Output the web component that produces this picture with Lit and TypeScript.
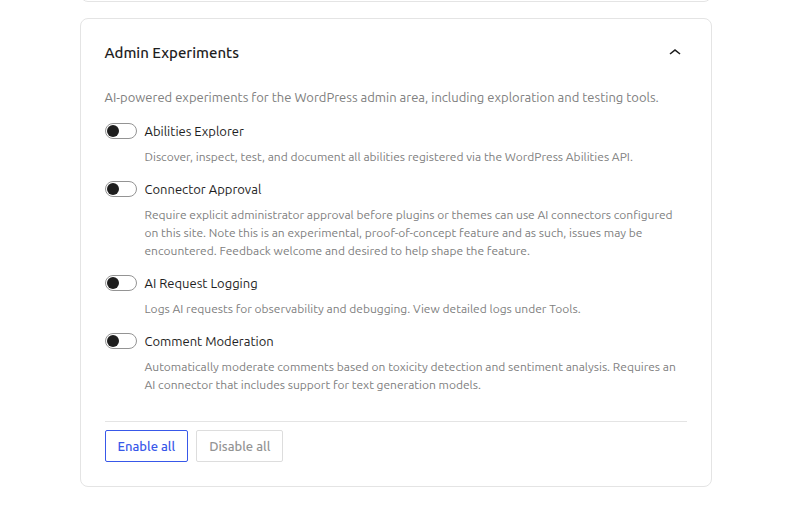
import { LitElement, html, css } from 'lit';
import { customElement, property, state } from 'lit/decorators.js';

interface Experiment { id: string; label: string; help: string; enabled: boolean; }

/**
 * `<exp-toggle>` — Switch with a label and a help text below it.
 */
@customElement('exp-toggle')
export class ExpToggle extends LitElement {
  @property() label = '';
  @property() help = '';
  @property({ type: Boolean }) checked = false;

  static styles = css`
    :host { display: block; }
    .row {
      display: flex;
      align-items: center;
      gap: 8px;
      height: 18px;
    }
    .switch {
      appearance: none;
      display: flex;
      align-items: center;
      flex: none;
      box-sizing: border-box;
      width: 32px;
      height: 16px;
      margin: 0;
      padding: 0 1px;
      border: 1px solid #949494;
      border-radius: 8px;
      background: #fff;
      cursor: pointer;
    }
    .switch::before {
      content: '';
      width: 12px;
      height: 12px;
      border-radius: 50%;
      background: #1e1e1e;
    }
    .switch:checked {
      justify-content: flex-end;
      border-color: #3858e9;
      background: #3858e9;
    }
    .switch:checked::before { background: #fff; }
    .label {
      font-size: 13px;
      line-height: 18px;
      color: #1e1e1e;
    }
    .help {
      margin: 8px 0 0 40px;
      font-size: 12px;
      line-height: 18px;
      color: #808080;
    }
  `;

  private _onChange(e: Event): void {
    this.checked = (e.target as HTMLInputElement).checked;
    this.dispatchEvent(new CustomEvent('toggle-change', { detail: this.checked }));
  }

  render() {
    return html`
      <div class="row">
        <input class="switch" id="switch" type="checkbox" role="switch"
          aria-describedby="help" .checked=${this.checked} @change=${this._onChange}>
        <label class="label" for="switch">${this.label}</label>
      </div>
      <p class="help" id="help">${this.help}</p>
    `;
  }
}

@customElement('app-root')
export class AppRoot extends LitElement {
  @state() private _open = true;
  @state() private _items: Experiment[] = [
    {
      id: 'abilities',
      label: 'Abilities Explorer',
      help: 'Discover, inspect, test, and document all abilities registered via the WordPress Abilities API.',
      enabled: false,
    },
    {
      id: 'connectors',
      label: 'Connector Approval',
      help: 'Require explicit administrator approval before plugins or themes can use AI connectors configured on this site. Note this is an experimental, proof-of-concept feature and as such, issues may be encountered. Feedback welcome and desired to help shape the feature.',
      enabled: false,
    },
    {
      id: 'logging',
      label: 'AI Request Logging',
      help: 'Logs AI requests for observability and debugging. View detailed logs under Tools.',
      enabled: false,
    },
    {
      id: 'moderation',
      label: 'Comment Moderation',
      help: 'Automatically moderate comments based on toxicity detection and sentiment analysis. Requires an AI connector that includes support for text generation models.',
      enabled: false,
    },
  ];

  static styles = css`
    :host {
      display: block;
      overflow: hidden;
      padding: 0 5px 32px 0;
      background: #fff;
      color: #1e1e1e;
      font-family: Ubuntu, 'Noto Sans', sans-serif;
    }
    .page {
      display: flex;
      flex-direction: column;
      gap: 16px;
      max-width: 632px;
      margin: 0 auto;
    }
    .card {
      padding: 24px;
      border: 1px solid #e4e4e4;
      border-radius: 8px;
    }
    /* scrolled out of view except for its lower edge */
    .card.previous {
      margin-top: -48px;
    }
    .header {
      display: flex;
      align-items: center;
      justify-content: space-between;
      height: 20px;
    }
    .title {
      margin: 0;
      font-size: 15px;
      font-weight: 500;
      line-height: 20px;
    }
    .collapse {
      display: flex;
      padding: 0;
      border: 0;
      background: none;
      color: inherit;
      cursor: pointer;
    }
    .intro {
      margin: 24px 0 15px;
      font-size: 13px;
      line-height: 20px;
      color: #808080;
    }
    .list {
      display: flex;
      flex-direction: column;
      gap: 14px;
    }
    .actions {
      display: flex;
      gap: 8px;
      margin-top: 27px;
      padding-top: 8px;
      border-top: 1px solid #e4e4e4;
    }
    .button {
      height: 32px;
      padding: 0 12px;
      border: 1px solid #3858e9;
      border-radius: 2px;
      background: #fff;
      color: #3858e9;
      font: 500 13px/20px Ubuntu, 'Noto Sans', sans-serif;
      cursor: pointer;
    }
    .button:disabled {
      border-color: #ddd;
      color: #949494;
      cursor: default;
    }
  `;

  private _setAll(enabled: boolean): void {
    this._items = this._items.map(i => ({ ...i, enabled }));
  }

  private _setOne(id: string, enabled: boolean): void {
    this._items = this._items.map(i => (i.id === id ? { ...i, enabled } : i));
  }

  private _renderBody() {
    return html`
      <p class="intro">AI-powered experiments for the WordPress admin area, including exploration and testing tools.</p>
      <div class="list">
        ${this._items.map(i => html`
          <exp-toggle
            .label=${i.label}
            .help=${i.help}
            .checked=${i.enabled}
            @toggle-change=${(e: CustomEvent<boolean>) => this._setOne(i.id, e.detail)}
          ></exp-toggle>
        `)}
      </div>
      <div class="actions">
        <button class="button" ?disabled=${this._items.every(i => i.enabled)}
          @click=${() => this._setAll(true)}>Enable all</button>
        <button class="button" ?disabled=${this._items.every(i => !i.enabled)}
          @click=${() => this._setAll(false)}>Disable all</button>
      </div>
    `;
  }

  render() {
    return html`
      <div class="page">
        <div class="card previous"></div>
        <section class="card">
          <header class="header">
            <h2 class="title">Admin Experiments</h2>
            <button class="collapse" aria-label="Toggle section" aria-expanded=${this._open}
              @click=${() => { this._open = !this._open; }}>
              <svg width="24" height="24" viewBox="0 0 24 24" fill="currentColor" aria-hidden="true">
                <path d=${this._open
                  ? 'M6.5 12.4L12 8l5.5 4.4-.9 1.2L12 10l-4.5 3.6-1-1.2z'
                  : 'M17.5 11.6L12 16l-5.5-4.4.9-1.2L12 14l4.5-3.6 1 1.2z'}></path>
              </svg>
            </button>
          </header>
          ${this._open ? this._renderBody() : ''}
        </section>
      </div>
    `;
  }
}

declare global {
  interface HTMLElementTagNameMap {
    'app-root': AppRoot;
    'exp-toggle': ExpToggle;
  }
}
